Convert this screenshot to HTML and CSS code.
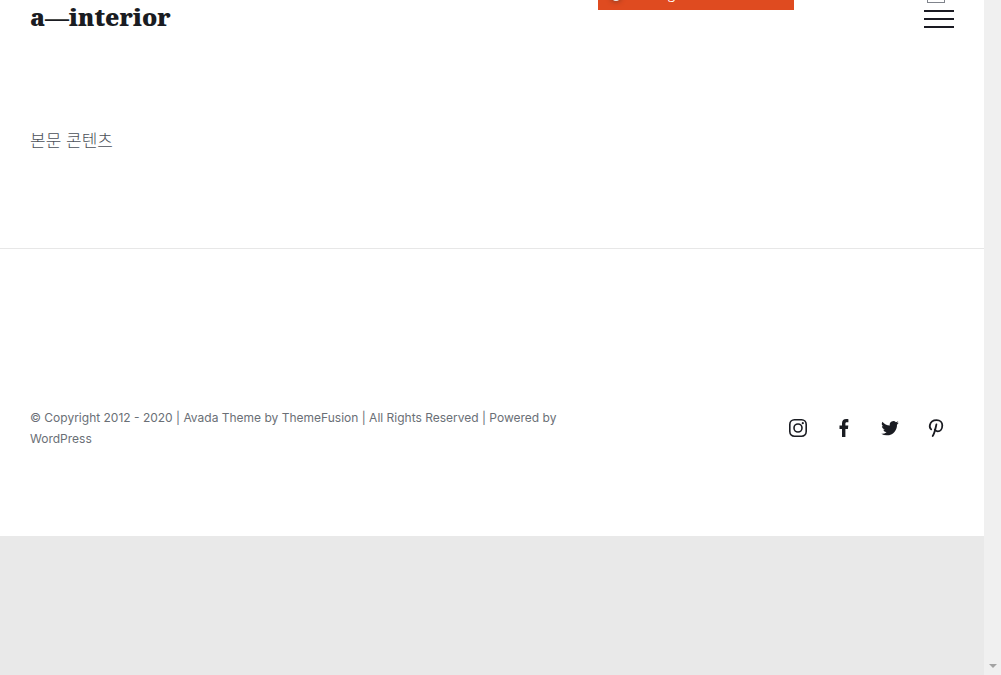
FILE: index.html
```
<!DOCTYPE html>
<html lang="ko">
<head>
  <meta charset="UTF-8" />
  <meta name="viewport" content="width=device-width, initial-scale=1.0"/>
  <title>a—interior</title>
  <link rel="stylesheet" href="styles.css">
</head>
<body>

  <div class="page">
    <header class="header">
      <a class="logo" href="#">a—interior</a>
      <button class="menu-toggle" type="button" aria-label="Menu">
        <span></span>
        <span></span>
        <span></span>
      </button>
    </header>

    <main class="content">
      <p>본문 콘텐츠</p>
    </main>

    <footer class="footer">
      <p class="copyright">© Copyright 2012 - 2020 | Avada Theme by <a href="#">ThemeFusion</a> | All Rights Reserved | Powered by <a href="#">WordPress</a></p>
      <nav class="social">
        <a href="#" aria-label="Instagram">
          <svg viewBox="0 0 20 20" fill="none" stroke="#1a1c22">
            <rect x="1.8" y="1.8" width="16.4" height="16.4" rx="4.6" stroke-width="1.6"/>
            <circle cx="10" cy="10" r="4" stroke-width="1.6"/>
            <circle cx="14.8" cy="5.2" r="1.1" fill="#1a1c22" stroke="none"/>
          </svg>
        </a>
        <a href="#" aria-label="Facebook">
          <svg viewBox="0 0 20 20" fill="#1a1c22">
            <path d="M8 19v-8H5.500V7.600H8V5.200C8 2.500 9.600 1 12.200 1c1 0 1.800.1 2.200.2v3.100h-1.600c-1.100 0-1.400.6-1.400 1.400v1.900h2.900L13.900 11h-2.500v8z"/>
          </svg>
        </a>
        <a href="#" aria-label="Twitter">
          <svg viewBox="0 0 24 24" fill="#1a1c22">
            <path d="M22.500 5.600c-.8.350-1.600.58-2.500.68.900-.53 1.580-1.380 1.900-2.380-.84.500-1.770.86-2.760 1.060A4.300 4.300 0 0 0 11.800 8.900C8.200 8.700 5 7 2.900 4.400a4.300 4.300 0 0 0 1.340 5.800c-.7-.02-1.370-.22-1.950-.54v.05c0 2.100 1.500 3.860 3.480 4.260-.64.170-1.300.2-1.960.08a4.350 4.350 0 0 0 4.060 3.020A8.700 8.700 0 0 1 1.500 18.850a12.200 12.200 0 0 0 6.630 1.950c8 0 12.550-6.760 12.260-12.830.84-.6 1.570-1.370 2.110-2.370z"/>
          </svg>
        </a>
        <a href="#" aria-label="Pinterest">
          <svg viewBox="0 0 20 20" fill="none" stroke="#1a1c22" stroke-width="1.800" stroke-linecap="round" stroke-linejoin="round">
            <path d="M5.200 11.400C3.800 10.300 3.500 8.700 3.900 7 4.600 3.900 7.400 2.100 10.600 2.100c3.500 0 5.700 2.200 5.700 5.200 0 3.500-1.900 6.100-4.600 6.100-1.500 0-2.600-.8-2.900-1.800"/>
            <path d="M10.400 6.400C9.500 10.500 8.700 15 6.700 18"/>
          </svg>
        </a>
      </nav>
    </footer>
  </div>

  <!-- page scroll track -->
  <div class="scroll-track">
    <svg viewBox="0 0 8 4" fill="#a3a3a3"><path d="M0 0h8L4 4z"/></svg>
  </div>

  <!-- notice hanging over the top edge -->
  <div class="notice">
    <span class="notice-dot"></span>
    <span class="notice-text">g</span>
  </div>
  <div class="tab-handle"></div>

</body>
</html>
```

FILE: styles.css
```
* {
  box-sizing: border-box;
}

body {
  margin: 0;
  min-height: 100vh;
  display: flex;
  background: #e9e9e9;
  font-family: "Open Sans", "Noto Sans CJK KR", sans-serif;
  color: #6a6f76;
}

a {
  color: inherit;
  text-decoration: none;
}

p {
  margin: 0;
}

.page {
  flex: 1;
}

.header {
  display: flex;
  justify-content: space-between;
  align-items: center;
  height: 37px;
  padding: 0 30px;
  background: #fff;
}

.logo {
  align-self: flex-start;
  font-family: "Noto Serif", "Liberation Serif", serif;
  font-size: 24px;
  font-weight: 900;
  line-height: 34px;
  color: #1a1c22;
}

.menu-toggle {
  display: flex;
  flex-direction: column;
  gap: 6px;
  width: 30px;
  padding: 0;
  border: none;
  background: none;
  cursor: pointer;
}

.menu-toggle span {
  height: 2px;
  background: #1a1a22;
}

.content {
  padding: 91px 30px 96px;
  background: #fff;
  border-bottom: 1px solid #e7e7e7;
  font-family: "Noto Sans CJK KR", sans-serif;
  font-size: 17px;
  font-weight: 300;
  line-height: 24px;
  color: #4b5058;
}

.footer {
  display: flex;
  justify-content: space-between;
  align-items: center;
  padding: 158px 38px 87px 30px;
  background: #fff;
}

.copyright {
  flex: 0 1 60%;
  font-family: Inter, sans-serif;
  font-size: 12px;
  line-height: 21px;
}

.social {
  display: flex;
  gap: 26px;
}

.social svg {
  display: block;
  width: 20px;
  height: 20px;
}

.scroll-track {
  display: flex;
  justify-content: center;
  align-items: flex-end;
  width: 17px;
  padding-bottom: 7px;
  background: #f0f0f0;
}

.scroll-track svg {
  width: 8px;
  height: 4px;
}

.notice {
  position: absolute;
  top: 0;
  right: 207px;
  display: flex;
  align-items: flex-end;
  gap: 48px;
  width: 196px;
  height: 10px;
  padding-left: 14px;
  overflow: hidden;
  background: #df4b20;
}

.notice-dot {
  width: 8px;
  height: 8px;
  margin-bottom: 9px;
  border-radius: 50%;
  background: #eee;
  box-shadow: 0 0 5px 1px #8c3a20;
}

.notice-text {
  font-size: 13px;
  line-height: 18px;
  margin-bottom: 7px;
  color: #fff;
}

.tab-handle {
  position: absolute;
  top: 0;
  right: 56px;
  width: 18px;
  height: 3px;
  border: 1px solid #80848c;
  border-top: none;
}
```
